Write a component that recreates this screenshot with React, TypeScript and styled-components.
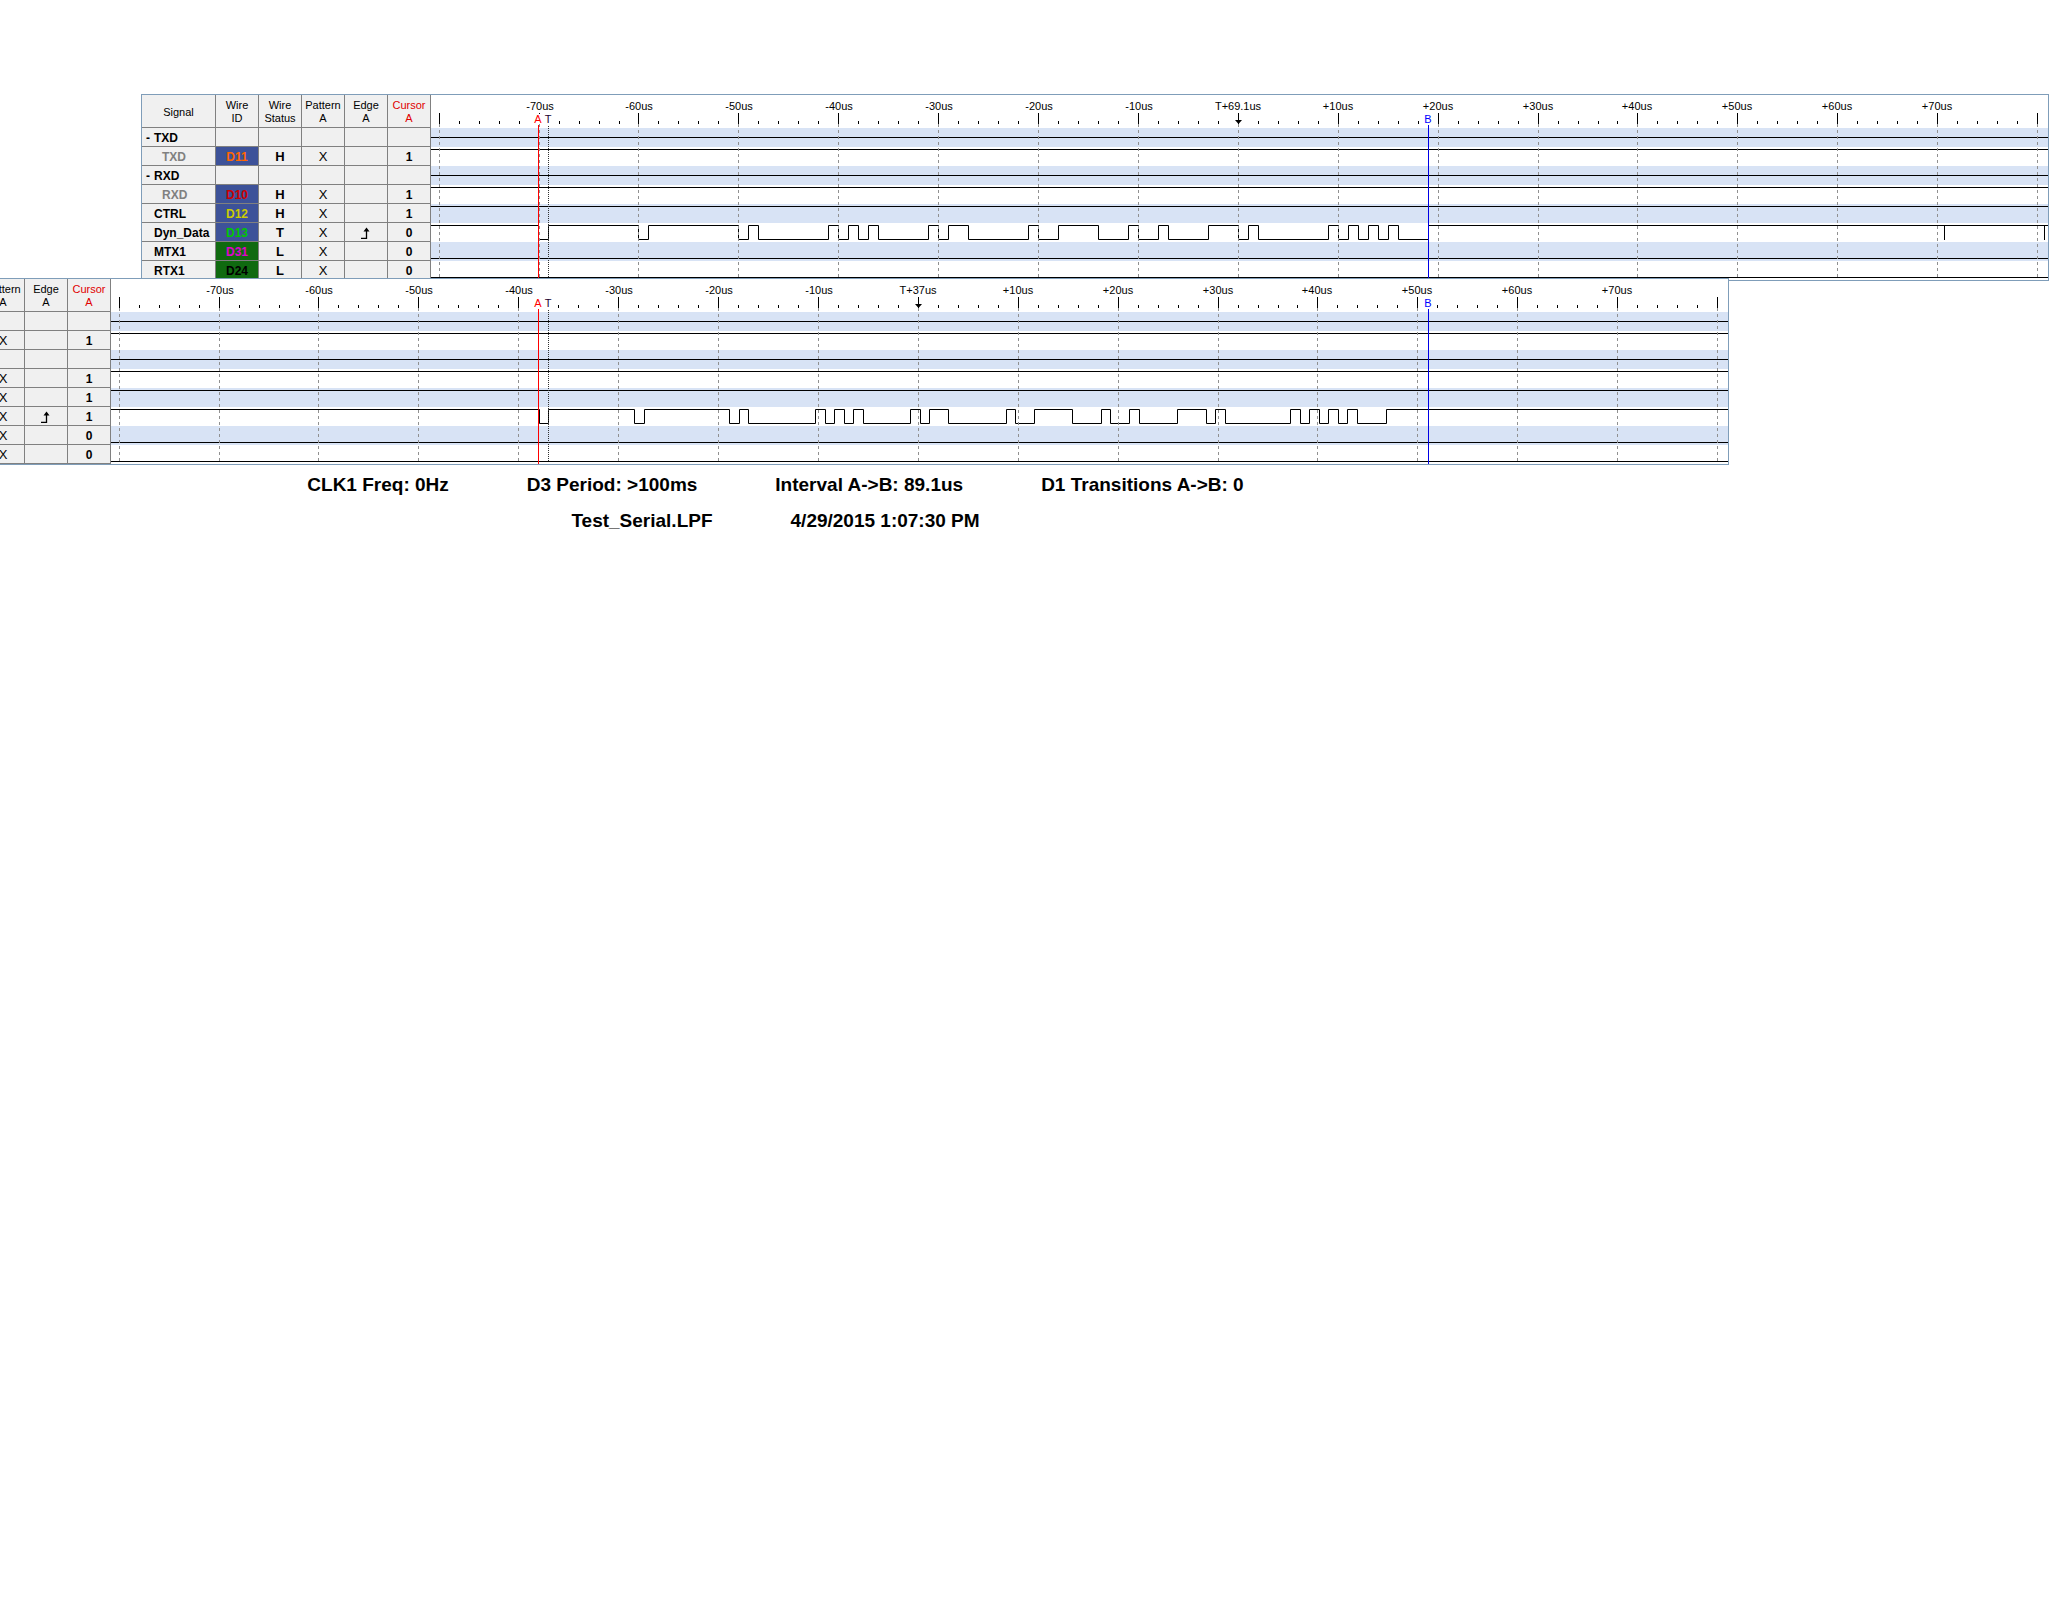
import React from "react";
import styled, { createGlobalStyle, css } from "styled-components";

const GlobalStyle = createGlobalStyle`
  *, *::before, *::after { box-sizing: border-box; }
  body {
    margin: 0;
    background: #fff;
    color: #000;
    font-family: "Liberation Sans", Arial, sans-serif;
    overflow-x: hidden;
  }
`;

const Page = styled.main`
  display: flex;
  flex-direction: column;
  min-height: 100vh;
  padding-top: 94px;
`;

const Panel = styled.section<{ $front?: boolean }>`
  display: flex;
  background: #fff;
  border: 1px solid #7f9db9;
  margin: 0 19px 0 141px;
  ${(p) =>
    p.$front &&
    css`
      position: relative;
      border-left: 0;
      margin: -3px 339px 0 -18px;
    `}
`;

const SignalTable = styled.table`
  flex: none;
  table-layout: fixed;
  border-collapse: separate;
  border-spacing: 0;
  background: #f0f0f0;
`;

const HeadCell = styled.th<{ $wide?: boolean; $accent?: boolean }>`
  width: ${(p) => (p.$wide ? 74 : 43)}px;
  height: 33px;
  padding: 2px 0 0;
  border: solid #808080;
  border-width: 0 1px 1px 0;
  font-size: 11px;
  font-weight: 400;
  line-height: 13px;
  text-align: center;
  color: ${(p) => (p.$accent ? "#e00000" : "#000")};
`;

const Cell = styled.td<{ $bg?: string; $ink?: string; $light?: boolean; $large?: boolean }>`
  height: 19px;
  padding: 2px 0 0;
  border: solid #808080;
  border-width: 0 1px 1px 0;
  font-size: ${(p) => (p.$large ? 13 : 12)}px;
  font-weight: ${(p) => (p.$light ? 400 : 700)};
  line-height: 16px;
  text-align: center;
  background: ${(p) => p.$bg ?? "transparent"};
  color: ${(p) => p.$ink ?? "#000"};
`;

const NameCell = styled.th<{ $child?: boolean }>`
  height: 19px;
  padding: 2px 0 0 ${(p) => (p.$child ? 20 : 12)}px;
  border: solid #808080;
  border-width: 0 1px 1px 0;
  font-size: 12px;
  font-weight: 700;
  line-height: 16px;
  text-align: left;
  white-space: nowrap;
  color: ${(p) => (p.$child ? "#808080" : "#000")};
`;

const Toggle = styled.button`
  width: 8px;
  margin: 0 0 0 -8px;
  padding: 0;
  border: 0;
  background: none;
  color: inherit;
  font: inherit;
  text-align: left;
  cursor: pointer;
`;

const EdgeGlyph = styled.svg`
  display: block;
  margin: 0 auto;
`;

const ChartArea = styled.svg`
  display: block;
  flex: 1;
  min-width: 0;
  height: 185px;
  overflow: hidden;
  font-size: 11px;
  text-anchor: middle;
`;

const Readouts = styled.footer`
  display: flex;
  flex-direction: column;
  width: 75%;
  padding-top: 2px;
`;

const ReadoutRow = styled.div`
  display: flex;
  justify-content: center;
  gap: 78px;
  font-size: 19px;
  font-weight: 700;
  line-height: 36px;
  white-space: nowrap;
`;

const BLUE = "#3d5299";
const GREEN = "#106a10";

type Signal = {
  name: string;
  group?: boolean;
  child?: boolean;
  wire?: string;
  bg?: string;
  ink?: string;
  status?: string;
  edge?: boolean;
};

const signals: Signal[] = [
  { name: "TXD", group: true },
  { name: "TXD", child: true, wire: "D11", bg: BLUE, ink: "#ff6600", status: "H" },
  { name: "RXD", group: true },
  { name: "RXD", child: true, wire: "D10", bg: BLUE, ink: "#cc0000", status: "H" },
  { name: "CTRL", wire: "D12", bg: BLUE, ink: "#cccc00", status: "H" },
  { name: "Dyn_Data", wire: "D13", bg: BLUE, ink: "#00c800", status: "T", edge: true },
  { name: "MTX1", wire: "D31", bg: GREEN, ink: "#e000d0", status: "L" },
  { name: "RTX1", wire: "D24", bg: GREEN, ink: "#000000", status: "L" },
];

function RisingEdge() {
  return (
    <EdgeGlyph width="13" height="12" viewBox="0 0 13 12" aria-label="Rising edge">
      <path d="M1 11.5H6.5V2" fill="none" stroke="#000" strokeWidth="1.3" />
      <path d="M6.5 0.5L9.5 4.5H3.5Z" fill="#000" />
    </EdgeGlyph>
  );
}

function Signals({ cursor, compact }: { cursor: string[]; compact?: boolean }) {
  return (
    <SignalTable>
      <thead>
        <tr>
          {!compact && (
            <>
              <HeadCell $wide scope="col">Signal</HeadCell>
              <HeadCell scope="col">Wire<br />ID</HeadCell>
              <HeadCell scope="col">Wire<br />Status</HeadCell>
            </>
          )}
          <HeadCell scope="col">Pattern<br />A</HeadCell>
          <HeadCell scope="col">Edge<br />A</HeadCell>
          <HeadCell scope="col" $accent>Cursor<br />A</HeadCell>
        </tr>
      </thead>
      <tbody>
        {signals.map((s, i) => (
          <tr key={i}>
            {!compact && (
              <>
                <NameCell scope="row" $child={s.child}>
                  {s.group && <Toggle type="button">-</Toggle>}
                  {s.name}
                </NameCell>
                <Cell $bg={s.bg} $ink={s.ink}>{s.wire}</Cell>
                <Cell $large>{s.status}</Cell>
              </>
            )}
            <Cell $large $light>{s.group ? "" : "X"}</Cell>
            <Cell>{s.edge && <RisingEdge />}</Cell>
            <Cell>{cursor[i]}</Cell>
          </tr>
        ))}
      </tbody>
    </SignalTable>
  );
}

const LANE_TOP = 33;
const LANE = 19;
const HIGH = 2;
const MIDDLE = 9;
const LOW = 16;
const flatLanes: [number, number][] = [
  [0, MIDDLE],
  [1, HIGH],
  [2, MIDDLE],
  [3, HIGH],
  [4, HIGH],
  [6, LOW],
  [7, LOW],
];
const DATA_LANE = 5;

// Two microseconds per tick, snapped to whole pixels.
const ticks = Array.from({ length: 81 }, (_, i) => 8 + 20 * i - (i >= 10 ? 1 : 0) - (i >= 59 ? 1 : 0));

type ChartProps = {
  origin: string;
  edges: number[];
  glitches?: number[];
  a: number;
  t: number;
  b: number;
};

function Chart({ origin, edges, glitches = [], a, t, b }: ChartProps) {
  const high = LANE_TOP + DATA_LANE * LANE + HIGH;
  const low = LANE_TOP + DATA_LANE * LANE + LOW;
  const wave =
    `M0 ${high}` +
    edges.map((x, i) => `H${x}V${i % 2 ? high : low}`).join("") +
    "H4000" +
    glitches.map((x) => `M${x} ${high}V${low}`).join("");
  const majors = ticks.filter((_, i) => i % 5 === 0);

  return (
    <ChartArea role="img" aria-label="Timing diagram">
      {[0, 2, 4, 6].map((n) => (
        <rect key={n} x="0" y={LANE_TOP + n * LANE} width="100%" height={LANE} fill="#d8e3f5" />
      ))}
      <g transform="translate(.5 .5)" fill="none" stroke="#000" strokeLinecap="square">
        {flatLanes.map(([n, y]) => (
          <path key={n} d={`M0 ${LANE_TOP + n * LANE + y}H4000`} />
        ))}
        <path d={wave} />
        {ticks.map((x, i) => (
          <path key={x} d={`M${x} ${i % 5 ? 26 : 18}V28`} />
        ))}
      </g>
      {majors.map((x) => (
        <path key={x} d={`M${x + 0.5} 29V182`} stroke="#909090" strokeDasharray="3 3" />
      ))}
      <path d={`M${t + 0.5} 31V183`} stroke="#303030" strokeDasharray="1 1" />
      <path d={`M${a + 0.5} 30V185`} stroke="#ff0000" />
      <path d={`M${b + 0.5} 30V185`} stroke="#0000e6" />
      <path d={`M${ticks[40] - 3} 25h7l-3.5 4z`} />
      {/* The A cursor label sits on a clear patch of the ruler. */}
      <rect x={a - 3} y="19" width="7" height="10" fill="#fff" />
      {majors.slice(1, -1).map((x, i) => {
        const us = (i - 7) * 10;
        const label = us === 0 ? origin : us > 0 ? `+${us}us` : `${us}us`;
        return (
          <text key={x} x={us < 0 ? x + 1 : x} y="15">
            {label}
          </text>
        );
      })}
      <text x={a} y="28" fill="#ff0000">A</text>
      <text x={t} y="28" fill="#200030">T</text>
      <text x={b} y="28" fill="#0000ff">B</text>
    </ChartArea>
  );
}

const upperEdges = [
  107, 117, 207, 217, 307, 317, 327, 397, 407, 417, 427, 437, 447, 497, 507, 517, 537, 597, 607, 627,
  667, 697, 707, 727, 737, 777, 807, 817, 827, 897, 907, 917, 927, 937, 947, 957, 967, 997,
];
const lowerEdges = [
  428, 437, 523, 533, 618, 628, 637, 704, 714, 723, 733, 742, 752, 799, 809, 818, 837, 895, 904, 923,
  961, 990, 999, 1018, 1028, 1066, 1095, 1104, 1114, 1179, 1189, 1198, 1208, 1217, 1227, 1236, 1246, 1275,
];

export default function App() {
  return (
    <>
      <GlobalStyle />
      <Page>
        <Panel>
          <Signals cursor={["", "1", "", "1", "1", "0", "0", "0"]} />
          <Chart origin="T+69.1us" edges={upperEdges} glitches={[1513, 1613]} a={107} t={117} b={997} />
        </Panel>
        <Panel $front>
          <Signals compact cursor={["", "1", "", "1", "1", "1", "0", "0"]} />
          <Chart origin="T+37us" edges={lowerEdges} a={427} t={437} b={1317} />
        </Panel>
        <Readouts>
          <ReadoutRow>
            <span>CLK1 Freq: 0Hz</span>
            <span>D3 Period: &gt;100ms</span>
            <span>Interval A-&gt;B: 89.1us</span>
            <span>D1 Transitions A-&gt;B: 0</span>
          </ReadoutRow>
          <ReadoutRow>
            <span>Test_Serial.LPF</span>
            <span>4/29/2015 1:07:30 PM</span>
          </ReadoutRow>
        </Readouts>
      </Page>
    </>
  );
}
